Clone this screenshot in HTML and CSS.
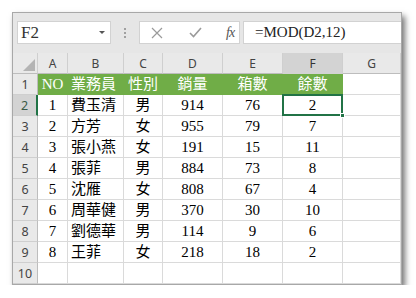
FILE: index.html
```html
<!DOCTYPE html>
<html>
<head>
<meta charset="utf-8">
<link rel="stylesheet" href="styles.css">
</head>
<body>
<div class="window">
  <div class="fbar">
    <div class="namebox"><span class="ref">F2</span><span class="caret"></span></div>
    <div class="dots"><i></i><i></i><i></i></div>
    <div class="icons">
      <svg class="ico" width="12" height="12" viewBox="0 0 12 12"><path d="M1 1L11 11M11 1L1 11" stroke="#9a9a9a" stroke-width="1.2" fill="none"/></svg>
      <svg class="ico chk" width="13" height="11" viewBox="0 0 13 11"><path d="M1 6L4.5 9.5L12 1" stroke="#9a9a9a" stroke-width="1.6" fill="none"/></svg>
      <span class="fx">fx</span>
    </div>
    <div class="formula">=MOD(D2,12)</div>
  </div>
  <div class="sheet">
    <div class="hd corner"><span class="tri"></span></div>
    <div class="hd">A</div><div class="hd">B</div><div class="hd">C</div><div class="hd">D</div><div class="hd">E</div><div class="hd sel">F</div><div class="hd">G</div>

    <div class="rh">1</div><div class="c g">NO</div><div class="c g l">業務員</div><div class="c g">性別</div><div class="c g">銷量</div><div class="c g">箱數</div><div class="c g">餘數</div><div class="c"></div>
    <div class="rh rsel">2</div><div class="c">1</div><div class="c l">費玉清</div><div class="c">男</div><div class="c">914</div><div class="c">76</div><div class="c active">2<span class="handle"></span></div><div class="c"></div>
    <div class="rh">3</div><div class="c">2</div><div class="c l">方芳</div><div class="c">女</div><div class="c">955</div><div class="c">79</div><div class="c">7</div><div class="c"></div>
    <div class="rh">4</div><div class="c">3</div><div class="c l">張小燕</div><div class="c">女</div><div class="c">191</div><div class="c">15</div><div class="c">11</div><div class="c"></div>
    <div class="rh">5</div><div class="c">4</div><div class="c l">張菲</div><div class="c">男</div><div class="c">884</div><div class="c">73</div><div class="c">8</div><div class="c"></div>
    <div class="rh">6</div><div class="c">5</div><div class="c l">沈雁</div><div class="c">女</div><div class="c">808</div><div class="c">67</div><div class="c">4</div><div class="c"></div>
    <div class="rh">7</div><div class="c">6</div><div class="c l">周華健</div><div class="c">男</div><div class="c">370</div><div class="c">30</div><div class="c">10</div><div class="c"></div>
    <div class="rh">8</div><div class="c">7</div><div class="c l">劉德華</div><div class="c">男</div><div class="c">114</div><div class="c">9</div><div class="c">6</div><div class="c"></div>
    <div class="rh">9</div><div class="c">8</div><div class="c l">王菲</div><div class="c">女</div><div class="c">218</div><div class="c">18</div><div class="c">2</div><div class="c"></div>
    <div class="rh">10</div><div class="c"></div><div class="c"></div><div class="c"></div><div class="c"></div><div class="c"></div><div class="c"></div><div class="c"></div>
  </div>
</div>
</body>
</html>
```

FILE: styles.css
```css
* { box-sizing: border-box; }
html, body { margin: 0; padding: 0; background: #fff; }
body { padding: 12px 0 0 12px; }

.window {
  width: 390px;
  height: 273px;
  border: 1px solid #a8a8a8;
  background: #fff;
  box-shadow: 3px 4px 6px rgba(0,0,0,0.55);
  overflow: hidden;
}

.fbar {
  height: 40px;
  background: #e6e6e6;
  display: flex;
  align-items: flex-start;
  padding: 8px 0 0 4px;
}
.namebox {
  width: 94px;
  height: 23px;
  background: #fff;
  border: 1px solid #d2d2d2;
  display: flex;
  align-items: center;
  justify-content: space-between;
  padding: 0 5px 0 3px;
}
.ref {
  font-family: "Liberation Serif", serif;
  font-size: 17px;
  color: #333;
}
.caret {
  width: 0; height: 0;
  border-left: 3px solid transparent;
  border-right: 3px solid transparent;
  border-top: 3px solid #555;
}
.dots {
  width: 28px;
  height: 23px;
  display: flex;
  flex-direction: column;
  align-items: center;
  justify-content: center;
  gap: 2px;
}
.dots i {
  display: block;
  width: 2px; height: 2px;
  background: #a0a0a0;
}
.icons {
  width: 101px;
  height: 23px;
  background: #fff;
  border: 1px solid #d2d2d2;
  display: flex;
  align-items: center;
  padding-left: 11px;
}
.ico { display: block; }
.chk { margin-left: 26px; }
.fx {
  margin-left: 24px;
  font-family: "Liberation Serif", serif;
  font-style: italic;
  font-size: 14px;
  color: #555;
  letter-spacing: -1px;
}
.formula {
  flex: 1;
  height: 23px;
  margin-left: 3px;
  background: #fff;
  border: 1px solid #d2d2d2;
  border-right: none;
  font-family: "Liberation Serif", serif;
  font-size: 15px;
  color: #222;
  line-height: 21px;
  padding-left: 11px;
}

.sheet {
  display: grid;
  grid-template-columns: 25px 30px 56px 39px 60px 60px 60px 58px;
  grid-auto-rows: 21px;
}
.hd {
  background: #e9e9e9;
  border-right: 1px solid #cfcfcf;
  border-bottom: 1px solid #bdbdbd;
  font-family: "Noto Sans", sans-serif;
  font-size: 12px;
  color: #444;
  display: flex;
  align-items: center;
  justify-content: center;
}
.hd.sel { background: #d3d3d3; border-bottom: 1px solid #d3d3d3; color: #333; }
.corner { position: relative; }
.tri {
  position: absolute;
  right: 2px;
  bottom: 2px;
  width: 12px;
  height: 12px;
  background: #b4b4b4;
  clip-path: polygon(100% 0, 100% 100%, 0 100%);
}
.rh {
  background: #e9e9e9;
  border-right: 1px solid #bdbdbd;
  border-bottom: 1px solid #cfcfcf;
  font-family: "Noto Sans", sans-serif;
  font-size: 12.5px;
  color: #444;
  display: flex;
  align-items: center;
  justify-content: center;
}
.rh.rsel { background: #d3d3d3; border-right: 2px solid #217346; color: #3a5a46; }
.c {
  border-right: 1px solid #dadada;
  border-bottom: 1px solid #dadada;
  font-family: "Liberation Serif", "Noto Sans CJK TC", serif;
  font-size: 15px;
  color: #000;
  display: flex;
  align-items: center;
  justify-content: center;
  line-height: 20px;
  white-space: nowrap;
}
.c.l { justify-content: flex-start; padding-left: 3px; }
.c.g {
  background: #70ad47;
  color: #fff;
  border-right-color: #70ad47;
  border-bottom-color: #70ad47;
}
.c.active {
  position: relative;
  border: 2px solid #217346;
  margin: -1px 0 0 -1px;
}
.handle {
  position: absolute;
  right: -4px;
  bottom: -4px;
  width: 5px;
  height: 5px;
  background: #217346;
  border: 1px solid #fff;
}
```
